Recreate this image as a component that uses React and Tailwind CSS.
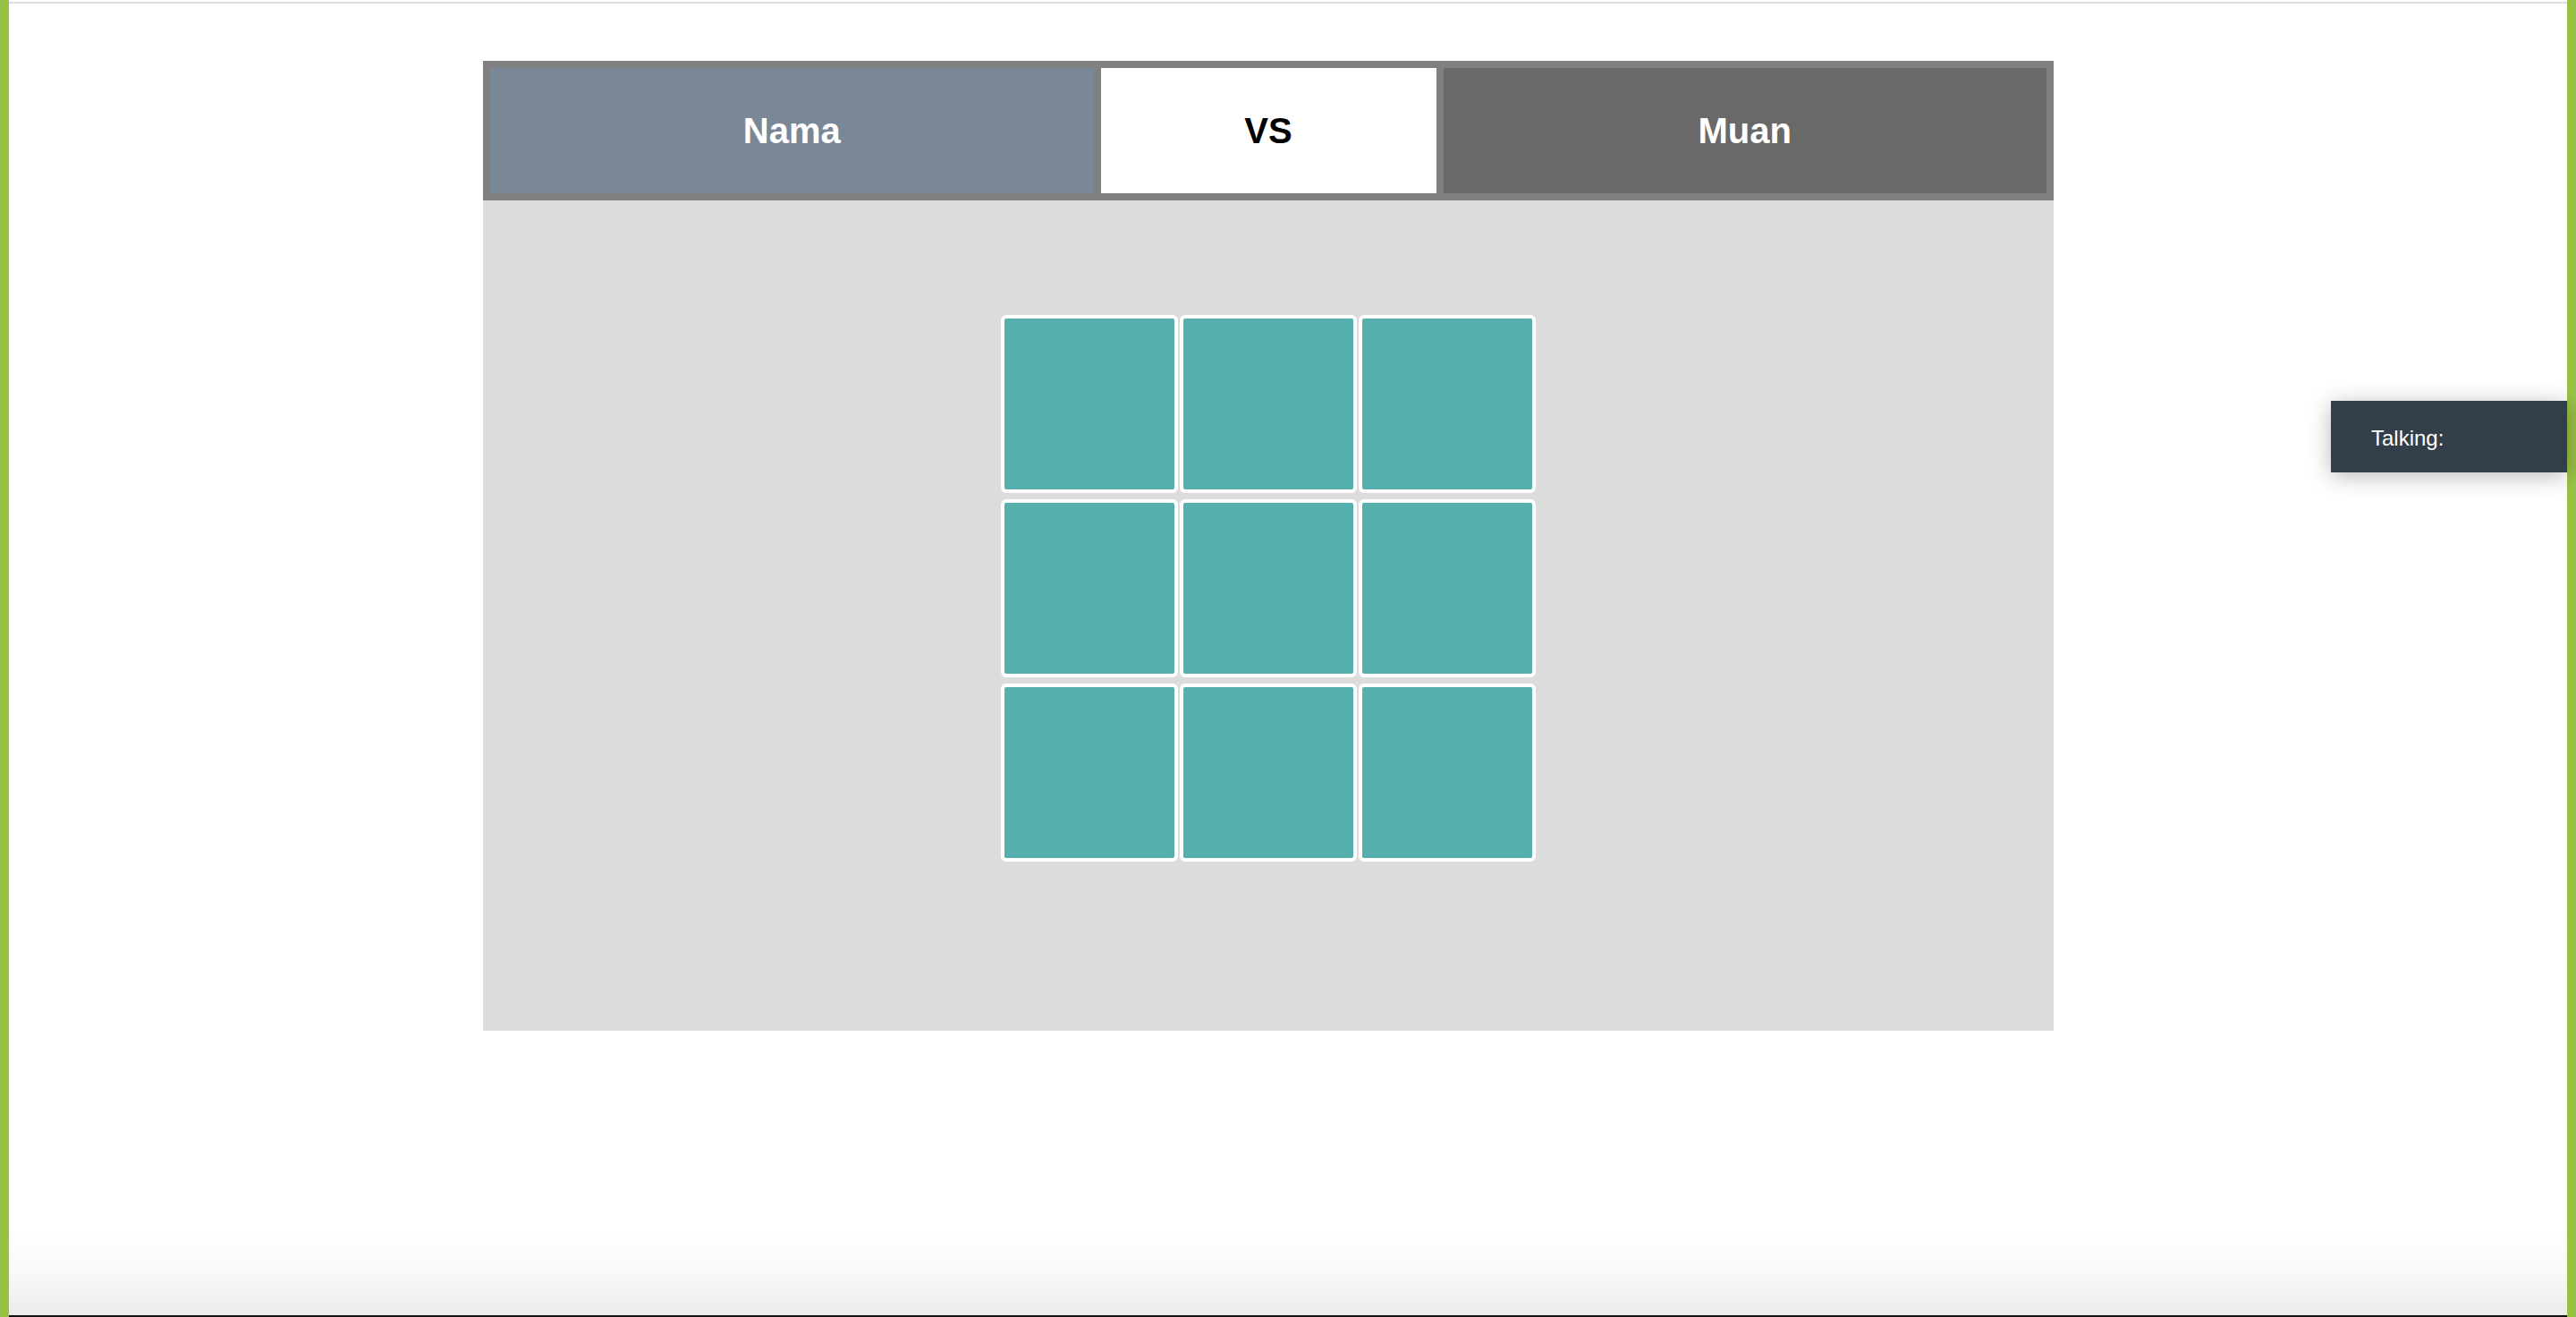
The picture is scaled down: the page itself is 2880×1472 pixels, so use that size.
const cells = Array.from({ length: 9 }, (_, i) => i);

function PlayerBox({ name, tone }) {
  return (
    <div className={`flex-1 flex items-center justify-center text-[40px] font-bold text-white ${tone}`}>
      {name}
    </div>
  );
}

export default function App() {
  return (
    <div className="w-full h-[1472px] flex bg-white overflow-hidden font-['Liberation_Sans',Arial,sans-serif]">
      <div className="w-[10px] shrink-0 bg-[#99c146]" />

      <div className="flex-1 relative flex flex-col">
        {/* top edge */}
        <div className="h-[2px] mt-[2px] bg-[#dddce3]" />

        {/* game panel */}
        <div className="mt-[64px] ml-[530px] w-[1756px] flex flex-col">
          <div className="h-[156px] bg-[#808080] p-2 flex gap-2">
            <PlayerBox name="Nama" tone="bg-[#7a8797]" />
            <div className="w-[375px] bg-white flex items-center justify-center text-[40px] font-bold text-black">
              VS
            </div>
            <PlayerBox name="Muan" tone="bg-[#696969]" />
          </div>

          <div className="h-[928px] bg-[#dcdcdc] pt-[128px] flex justify-center">
            <div className="grid grid-cols-[repeat(3,198px)] gap-x-[2px] gap-y-[7px] h-fit">
              {cells.map((c) => (
                <div key={c} className="h-[199px] border-4 border-white rounded-[6px] bg-[#55b0ad]" />
              ))}
            </div>
          </div>
        </div>

        {/* talking drawer */}
        <div className="absolute top-[448px] right-0 w-[264px] h-[80px] bg-[#333e4b] flex items-center pl-[45px] pt-[4px]
          text-[24px] text-white shadow-[0_4px_24px_rgba(0,0,0,0.28)]">
          Talking:
        </div>

        {/* bottom shade */}
        <div className="absolute left-0 right-0 bottom-0 h-[100px] bg-linear-to-b from-white/0 via-[#f9f9f9] to-[#ebebeb]" />
        <div className="absolute left-0 right-0 bottom-0 h-[2px] bg-[#111]" />
      </div>

      <div className="w-[10px] shrink-0 bg-[#99c146]" />
    </div>
  );
}
